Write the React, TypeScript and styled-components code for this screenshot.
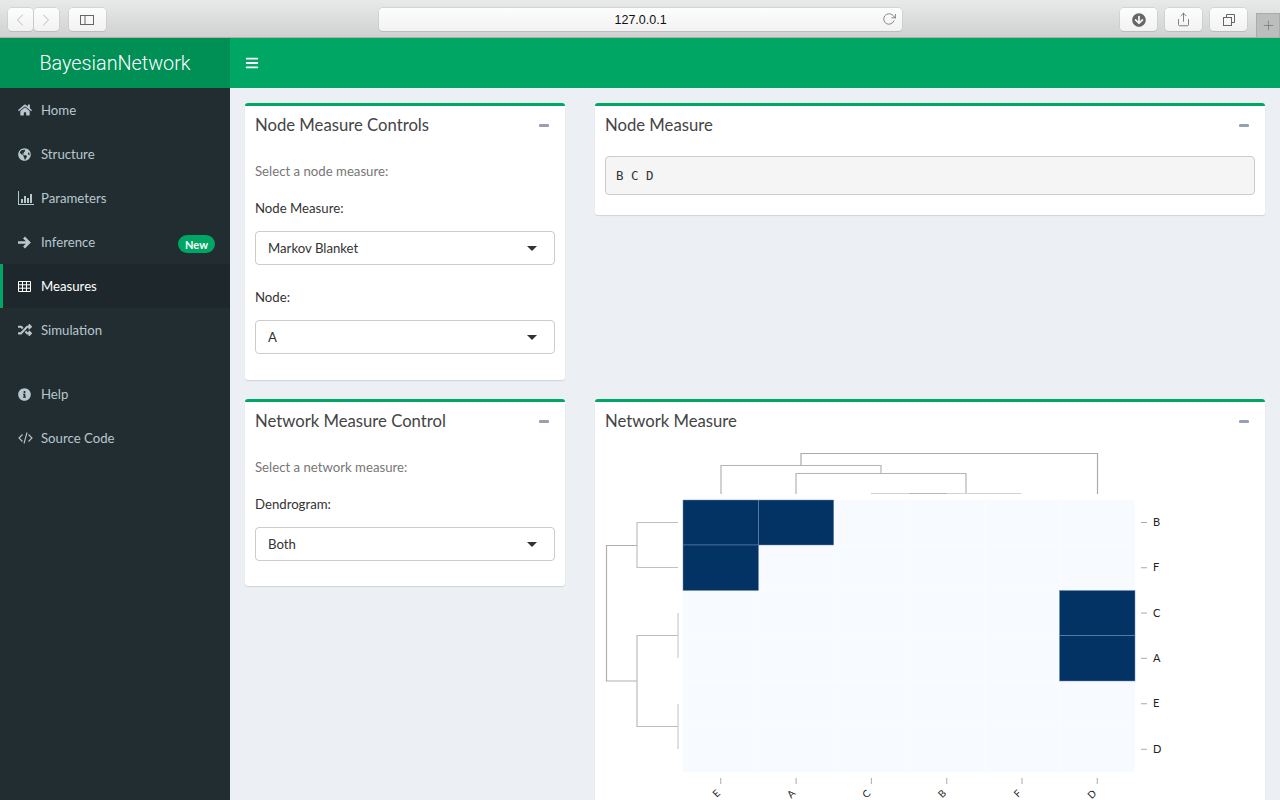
import styled, { createGlobalStyle } from "styled-components";
import {
  FaHome,
  FaGlobeAmericas,
  FaRandom,
  FaInfoCircle,
  FaBars,
  FaArrowCircleDown,
} from "react-icons/fa";
import { FiChevronLeft, FiChevronRight, FiRotateCw, FiShare, FiPlus } from "react-icons/fi";

const GlobalStyle = createGlobalStyle`
  html, body {
    margin: 0;
    padding: 0;
    height: 100%;
    overflow: hidden;
    font-family: Lato, "Noto Sans", sans-serif;
    background: #eceff4;
  }
  * { box-sizing: border-box; }
`;

const Page = styled.div`
  width: 1280px;
  height: 800px;
  display: flex;
  flex-direction: column;
  overflow: hidden;
`;

const Chrome = styled.div`
  height: 38px;
  flex: none;
  display: flex;
  align-items: flex-start;
  padding: 8px 0 0 8px;
  background: linear-gradient(#e8eaea, #d0d2d2);
  border-bottom: 1px solid #aeb0b0;
`;
const ChromeBtn = styled.div<{ $w: number; $ml?: number }>`
  width: ${(p) => p.$w}px;
  height: 23px;
  margin-left: ${(p) => p.$ml ?? 0}px;
  display: flex;
  align-items: center;
  justify-content: center;
  background: linear-gradient(#fdfdfd, #f2f2f2);
  border-radius: 4px;
  box-shadow: 0 0 0 0.5px #c4c4c4, 0 1px 0 #b8b8b8;
  color: #666;
`;
const AddressBar = styled(ChromeBtn)`
  position: relative;
  margin-left: 273px;
  font-family: "Liberation Sans", sans-serif;
  font-size: 12.5px;
  color: #111;
`;
const Reload = styled.span`
  position: absolute;
  right: 6px;
  top: 4px;
  display: flex;
  color: #666;
`;
const NewTab = styled.div`
  width: 24px;
  height: 24px;
  margin: 5px 0 0 9px;
  display: flex;
  align-items: center;
  justify-content: center;
  background: #bcbebe;
  border: 1px solid #aaacac;
  border-bottom: none;
  color: #666;
`;

const Body = styled.div`
  flex: 1;
  min-height: 0;
  display: grid;
  grid-template-columns: 230px 1fr;
  grid-template-rows: 50px 1fr;
`;
const Brand = styled.div`
  background: #008f54;
  color: #fff;
  display: flex;
  align-items: center;
  justify-content: center;
  font-family: Roboto, sans-serif;
  font-weight: 300;
  font-size: 19.8px;
`;
const TopBar = styled.div`
  background: #00a663;
  color: #fff;
  display: flex;
  align-items: center;
  padding-left: 15px;
`;
const Sidebar = styled.nav`
  background: #222d32;
  display: flex;
  flex-direction: column;
`;
const NavItem = styled.div<{ $active?: boolean; $gap?: boolean }>`
  height: 44px;
  flex: none;
  margin-top: ${(p) => (p.$gap ? 20 : 0)}px;
  display: flex;
  align-items: center;
  padding-left: ${(p) => (p.$active ? 15 : 18)}px;
  padding-right: 15px;
  background: ${(p) => (p.$active ? "#1e282c" : "transparent")};
  border-left: ${(p) => (p.$active ? "3px solid #00a663" : "none")};
  color: ${(p) => (p.$active ? "#fff" : "#b8c7ce")};
  font-size: 13.2px;
`;
const NavIcon = styled.span`
  width: 23px;
  display: flex;
  align-items: center;
  flex: none;
`;
const Badge = styled.span`
  margin: 4px 0 0 auto;
  height: 18px;
  padding: 0 7px;
  display: flex;
  align-items: center;
  border-radius: 9px;
  background: #00a663;
  color: #fff;
  font-size: 11px;
  font-weight: 700;
`;

const Content = styled.main`
  padding: 15px;
  display: grid;
  grid-template-columns: 320px 670px;
  grid-template-rows: 296px auto;
  column-gap: 30px;
  align-items: start;
  overflow: hidden;
`;
const Box = styled.section`
  background: #fff;
  border-top: 3px solid #00a663;
  border-radius: 3px;
  box-shadow: 0 1px 1px rgba(0, 0, 0, 0.12);
`;
const BoxHeader = styled.div`
  height: 38px;
  display: flex;
  align-items: center;
  justify-content: space-between;
  padding: 0 16px 0 10px;
`;
const BoxTitle = styled.h3`
  margin: -1px 0 0;
  font-size: 16.7px;
  font-weight: 400;
  color: #444;
`;
const Minus = styled.span`
  width: 10px;
  height: 3px;
  border-radius: 1px;
  background: #97a0b3;
`;
const BoxBody = styled.div<{ $pb: number }>`
  padding: 10px 10px ${(p) => p.$pb}px;
`;
const Hint = styled.p`
  margin: 8px 0 18px;
  font-size: 13.2px;
  line-height: 19px;
  color: #777;
`;
const FieldLabel = styled.label`
  display: block;
  margin-bottom: 13px;
  font-size: 13.2px;
  line-height: 19px;
  color: #333;
`;
const Select = styled.div`
  height: 34px;
  margin-bottom: 23px;
  display: flex;
  align-items: center;
  justify-content: space-between;
  padding: 0 17px 0 12px;
  border: 1px solid #ccc;
  border-radius: 4px;
  font-size: 13.2px;
  color: #333;
  &:last-child { margin-bottom: 0; }
  &::after {
    content: "";
    border-left: 5px solid transparent;
    border-right: 5px solid transparent;
    border-top: 5px solid #333;
  }
`;
const Pre = styled.pre`
  margin: 0;
  height: 39px;
  padding: 0 10px;
  display: flex;
  align-items: center;
  font-family: "DejaVu Sans Mono", monospace;
  font-size: 12.5px;
  color: #333;
  background: #f5f5f5;
  border: 1px solid #ccc;
  border-radius: 4px;
`;
const NodeBody = styled.div`
  padding: 12px 10px 20px;
`;
const ChartBox = styled(Box)`
  height: 500px;
`;

const colX = [683, 758.5, 833.7, 909, 984.5, 1059.5, 1135];
const rowY = [500, 545, 590.5, 635.5, 681, 726.5, 772];
const rowLabels = ["B", "F", "C", "A", "E", "D"];
const colLabels = ["E", "A", "C", "B", "F", "D"];
const darkCells = [
  [0, 0],
  [0, 1],
  [1, 0],
  [2, 5],
  [3, 5],
];
const dendrogram = [
  { d: "M801 465V453.5H1097.5V494", c: "#ababab" },
  { d: "M721 494V465.5H881V473", c: "#b4b4b4" },
  { d: "M796 494V473.5H966V493", c: "#b4b4b4" },
  { d: "M871 493.5H1021.5", c: "#d2d2d2" },
  { d: "M909 493.5H947", c: "#b8b8b8" },
  { d: "M678 522.5H637V567.5H678", c: "#c0c0c0" },
  { d: "M637 545.5H606.5V681H637", c: "#b0b0b0" },
  { d: "M678 635.5H637V726.5H678", c: "#bcbcbc" },
  { d: "M678 613V658", c: "#cccccc" },
  { d: "M678 704V749", c: "#cccccc" },
];

const Heatmap = styled.svg`
  display: block;
  margin-top: 3px;
  overflow: hidden;
`;

function NetworkPlot() {
  return (
    <Heatmap width={670} height={400} viewBox="595 443 670 400">
      <rect x={683} y={500} width={452} height={272} fill="#f7fbff" />
      {colX.slice(1, 6).map((x) => (
        <line key={x} x1={x} x2={x} y1={500} y2={772} stroke="#fff" strokeWidth={0.4} />
      ))}
      {rowY.slice(1, 6).map((y) => (
        <line key={y} x1={683} x2={1135} y1={y} y2={y} stroke="#fff" strokeWidth={0.4} />
      ))}
      {darkCells.map(([r, c]) => (
        <rect
          key={`${r}-${c}`}
          x={colX[c]}
          y={rowY[r]}
          width={colX[c + 1] - colX[c]}
          height={rowY[r + 1] - rowY[r]}
          fill="#033265"
          stroke="#6f8db5"
          strokeWidth={0.5}
        />
      ))}
      {dendrogram.map((l) => (
        <path key={l.d} d={l.d} fill="none" stroke={l.c} strokeWidth={1.2} />
      ))}
      {rowLabels.map((t, i) => {
        const y = (rowY[i] + rowY[i + 1]) / 2;
        return (
          <g key={t}>
            <line x1={1141} x2={1147} y1={y} y2={y} stroke="#aaa" />
            <text x={1153} y={y + 3.5} fontSize={11} fontFamily="Lato, sans-serif" fill="#222">
              {t}
            </text>
          </g>
        );
      })}
      {colLabels.map((t, i) => {
        const x = (colX[i] + colX[i + 1]) / 2;
        return (
          <g key={t}>
            <line x1={x} x2={x} y1={778} y2={784} stroke="#aaa" />
            <text
              x={x}
              y={794}
              fontSize={10}
              textAnchor="end"
              fontFamily="Lato, sans-serif"
              fill="#222"
              transform={`rotate(-45 ${x} 794)`}
            >
              {t}
            </text>
          </g>
        );
      })}
    </Heatmap>
  );
}

const ParamIcon = () => (
  <svg width="16" height="14" viewBox="0 0 16 14" fill="currentColor">
    <path d="M0 0h1v13h15v1H0z" />
    <path d="M3 8h2v4H3zM6 5h2v7H6zM9 7h2v5H9zM12 3h2v9h-2z" />
  </svg>
);
const TableIcon = () => (
  <svg width="13" height="11" viewBox="0 0 13 11" fill="none" stroke="currentColor">
    <path d="M.5.5h12v10H.5zM.5 3.8h12M.5 7.2h12M4.5.5v10M8.5.5v10" />
  </svg>
);
const ArrowIcon = () => (
  <svg width="13" height="13" viewBox="0 0 13 13" fill="none" stroke="currentColor" strokeWidth="2.6">
    <path d="M0 6.5h10.5M6 1.5l5 5-5 5" />
  </svg>
);
const CodeIcon = () => (
  <svg width="15" height="12" viewBox="0 0 15 12" fill="none" stroke="currentColor" strokeWidth="1.1">
    <path d="M4.5 2.5L1 6l3.5 3.5M10.5 2.5L14 6l-3.5 3.5M9 .5L6 11.5" />
  </svg>
);

const navItems = [
  { label: "Home", icon: <FaHome size={14} /> },
  { label: "Structure", icon: <FaGlobeAmericas size={13} /> },
  { label: "Parameters", icon: <ParamIcon /> },
  { label: "Inference", icon: <ArrowIcon />, badge: "New" },
  { label: "Measures", icon: <TableIcon />, active: true },
  { label: "Simulation", icon: <FaRandom size={14} /> },
  { label: "Help", icon: <FaInfoCircle size={13} />, gap: true },
  { label: "Source Code", icon: <CodeIcon /> },
];

const SidebarToggle = () => (
  <svg width="14" height="14" viewBox="0 0 14 14" fill="none" stroke="#666">
    <rect x="0.5" y="2.5" width="13" height="9" />
    <path d="M5 2.5v9" />
  </svg>
);
const TabsIcon = () => (
  <svg width="14" height="14" viewBox="0 0 14 14" fill="none" stroke="#666">
    <rect x="1.5" y="4.5" width="8" height="8" />
    <path d="M4.5 4.5v-3h8v8h-3" />
  </svg>
);

export default function App() {
  return (
    <Page>
      <GlobalStyle />
      <Chrome>
        <ChromeBtn $w={25}>
          <FiChevronLeft size={20} color="#bbb" strokeWidth={1.2} />
        </ChromeBtn>
        <ChromeBtn $w={25} $ml={1}>
          <FiChevronRight size={20} color="#bbb" strokeWidth={1.2} />
        </ChromeBtn>
        <ChromeBtn $w={37} $ml={10}>
          <SidebarToggle />
        </ChromeBtn>
        <AddressBar $w={525}>
          127.0.0.1
          <Reload>
            <FiRotateCw size={14} strokeWidth={1.3} />
          </Reload>
        </AddressBar>
        <ChromeBtn $w={37} $ml={218}>
          <FaArrowCircleDown size={14} color="#666" />
        </ChromeBtn>
        <ChromeBtn $w={37} $ml={8}>
          <FiShare size={15} strokeWidth={1.3} />
        </ChromeBtn>
        <ChromeBtn $w={37} $ml={8}>
          <TabsIcon />
        </ChromeBtn>
        <NewTab>
          <FiPlus size={15} strokeWidth={1} />
        </NewTab>
      </Chrome>
      <Body>
        <Brand>BayesianNetwork</Brand>
        <TopBar>
          <FaBars size={14} />
        </TopBar>
        <Sidebar>
          {navItems.map((n) => (
            <NavItem key={n.label} $active={n.active} $gap={n.gap}>
              <NavIcon>{n.icon}</NavIcon>
              {n.label}
              {n.badge && <Badge>{n.badge}</Badge>}
            </NavItem>
          ))}
        </Sidebar>
        <Content>
          <Box>
            <BoxHeader>
              <BoxTitle>Node Measure Controls</BoxTitle>
              <Minus />
            </BoxHeader>
            <BoxBody $pb={26}>
              <Hint>Select a node measure:</Hint>
              <FieldLabel>Node Measure:</FieldLabel>
              <Select>Markov Blanket</Select>
              <FieldLabel>Node:</FieldLabel>
              <Select>A</Select>
            </BoxBody>
          </Box>
          <Box>
            <BoxHeader>
              <BoxTitle>Node Measure</BoxTitle>
              <Minus />
            </BoxHeader>
            <NodeBody>
              <Pre>B C D</Pre>
            </NodeBody>
          </Box>
          <Box>
            <BoxHeader>
              <BoxTitle>Network Measure Control</BoxTitle>
              <Minus />
            </BoxHeader>
            <BoxBody $pb={25}>
              <Hint>Select a network measure:</Hint>
              <FieldLabel>Dendrogram:</FieldLabel>
              <Select>Both</Select>
            </BoxBody>
          </Box>
          <ChartBox>
            <BoxHeader>
              <BoxTitle>Network Measure</BoxTitle>
              <Minus />
            </BoxHeader>
            <NetworkPlot />
          </ChartBox>
        </Content>
      </Body>
    </Page>
  );
}
